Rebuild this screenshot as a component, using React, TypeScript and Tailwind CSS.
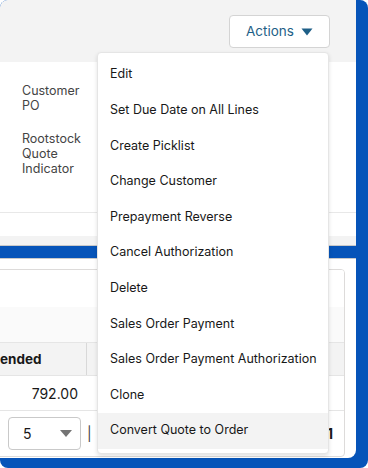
import React from "react";

const items = [
  "Edit",
  "Set Due Date on All Lines",
  "Create Picklist",
  "Change Customer",
  "Prepayment Reverse",
  "Cancel Authorization",
  "Delete",
  "Sales Order Payment",
  "Sales Order Payment Authorization",
  "Clone",
  "Convert Quote to Order",
];

export default function App() {
  return (
    <div
      className="relative w-[368px] h-[468px] overflow-hidden rounded-[8px] bg-[#0654b9] flex flex-col"
      style={{ fontFamily: "Inter, 'Liberation Sans', sans-serif" }}
    >
      {/* top card */}
      <div className="w-[356px] h-[246px] shrink-0 bg-white rounded-tl-[8px] flex flex-col border-b border-[#c9c9c9]">
        <div className="h-[62px] shrink-0 bg-[#f3f3f3] rounded-tl-[8px] flex justify-end pr-[26px] pt-[15px]">
          <div className="w-[101px] h-[33px] bg-white border border-[#d4d4d4] rounded-[4px] flex items-center justify-center gap-[7px] text-[#1e5f87] text-[13.5px]">
            <span>Actions</span>
            <svg width="12" height="8" viewBox="0 0 12 8">
              <path d="M0.5 0.5 L11.5 0.5 L6 7.5 Z" fill="#1e5f87" />
            </svg>
          </div>
        </div>
        <div className="h-[150px] shrink-0 flex flex-col pl-[22px] text-[12.5px] leading-[15px] text-[#444444]">
          <div className="w-[66px] mt-[21px]">Customer PO</div>
          <div className="w-[66px] mt-[18px]">Rootstock Quote Indicator</div>
        </div>
        <div className="h-[24px] shrink-0 border-t border-[#e8e8e8]" />
        <div className="flex-1 bg-[#f3f3f3]" />
      </div>

      {/* bottom container */}
      <div className="mt-[12px] w-[356px] h-[200px] shrink-0 bg-white border-t border-[#c9c9c9] rounded-br-[8px] pt-[10px] pr-[11px]">
        <div className="h-[188px] -ml-[2px] border border-[#dddbda] rounded-tr-[4px] rounded-br-[4px] flex flex-col overflow-hidden">
          <div className="h-[37px] shrink-0 bg-white" />
          <div className="h-[35px] shrink-0 bg-[#fafafa]" />
          <div className="h-[34px] shrink-0 bg-[#f3f3f3] border-t border-b border-[#e5e5e5] flex items-center">
            <div className="w-[88px] h-full flex items-center border-r border-[#d8d8d8] text-[13.5px] font-bold text-[#181818]">
              <span className="pl-[1px]">ended</span>
            </div>
          </div>
          <div className="h-[35px] shrink-0 bg-white border-b border-[#e5e5e5] flex items-center">
            <div className="w-[79px] text-right text-[14px] text-[#181818]">792.00</div>
          </div>
          <div className="flex-1 flex items-center pl-[9px] pr-[11px]">
            <div className="w-[73px] h-[33px] border border-[#c9c9c9] rounded-[4px] flex items-center pl-[14px] pr-[8px] justify-between text-[14px] text-[#181818]">
              <span>5</span>
              <svg width="12" height="7" viewBox="0 0 12 7">
                <path d="M0 0 L12 0 L6 7 Z" fill="#747474" />
              </svg>
            </div>
            <span className="ml-[6px] text-[14px] text-[#444]">|</span>
            <span className="ml-auto text-[14px] font-bold text-[#181818]">1</span>
          </div>
        </div>
      </div>

      {/* dropdown menu */}
      <div className="absolute left-[97px] top-[52px] w-[232px] bg-white border border-[#e5e5e5] rounded-[4px] shadow-[0_2px_4px_rgba(0,0,0,0.12)] py-[4px]">
        {items.map((t, i) => (
          <div
            key={t}
            className={
              "h-[35.6px] flex items-center pl-[12px] text-[12.5px] text-[#181818] " +
              (i === items.length - 1 ? "bg-[#f3f3f3]" : "")
            }
          >
            {t}
          </div>
        ))}
      </div>
    </div>
  );
}
